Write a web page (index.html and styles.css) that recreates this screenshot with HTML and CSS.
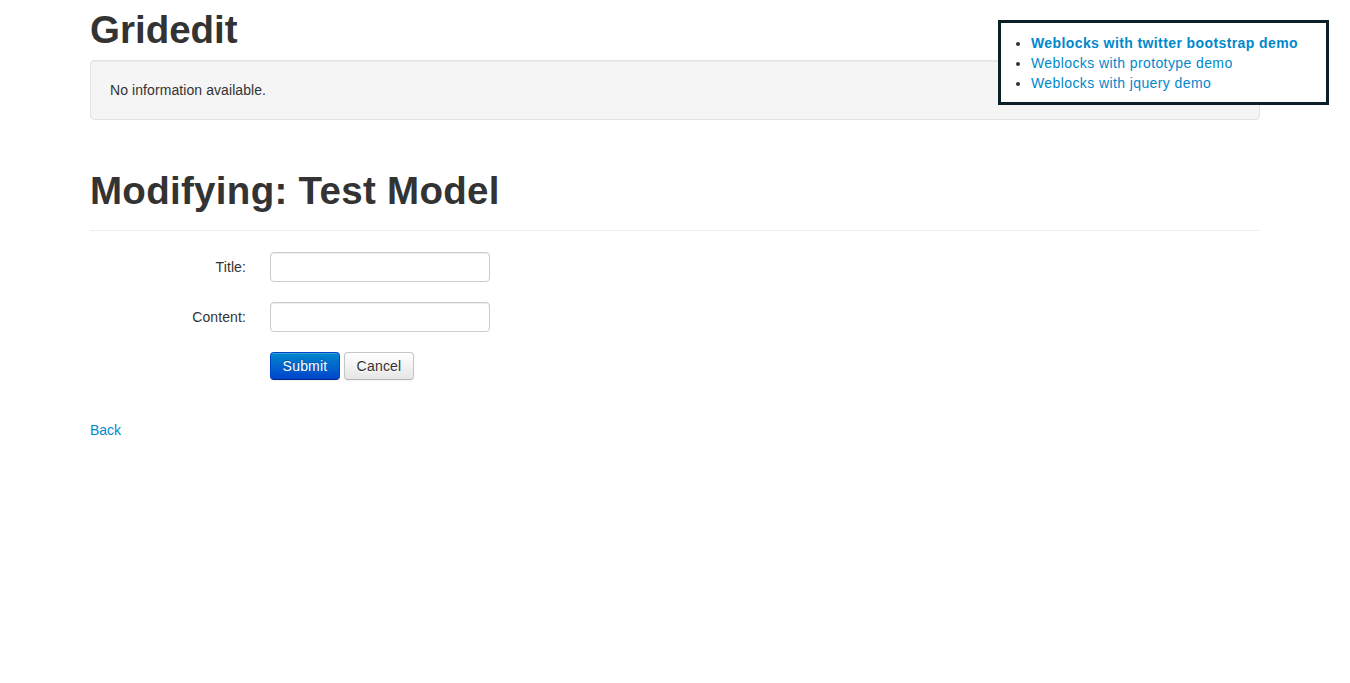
FILE: index.html
```html
<!DOCTYPE html>
<html>
<head>
<meta charset="utf-8">
<title>Gridedit</title>
<link rel="stylesheet" href="styles.css">
</head>
<body>
<div class="container">
  <h1 class="title">Gridedit</h1>
  <div class="well">No information available.</div>
  <div class="page-header"><h1>Modifying: Test Model</h1></div>
  <form class="form-horizontal">
    <div class="control-group">
      <label class="control-label">Title:</label>
      <div class="controls"><input type="text" class="field"></div>
    </div>
    <div class="control-group">
      <label class="control-label">Content:</label>
      <div class="controls"><input type="text" class="field"></div>
    </div>
    <div class="control-group actions">
      <div class="controls">
        <button type="button" class="btn btn-primary">Submit</button>
        <button type="button" class="btn">Cancel</button>
      </div>
    </div>
  </form>
  <a class="back" href="#">Back</a>
</div>
<div class="demos">
  <ul>
    <li><a href="#" class="current">Weblocks with twitter bootstrap demo</a></li>
    <li><a href="#">Weblocks with prototype demo</a></li>
    <li><a href="#">Weblocks with jquery demo</a></li>
  </ul>
</div>
</body>
</html>
```
FILE: styles.css
```css
html, body {
  margin: 0;
  padding: 0;
  background: #fff;
}
body {
  font-family: "Liberation Sans", Arial, sans-serif;
  font-size: 14px;
  line-height: 20px;
  color: #333;
}
a {
  color: #0088cc;
  text-decoration: none;
}
.container {
  width: 1170px;
  margin: 0 auto;
}
h1 {
  font-size: 38.5px;
  line-height: 40px;
  font-weight: bold;
  margin: 10px 0;
  color: #333;
}
.title {
  margin: 0;
  padding-top: 10px;
  padding-bottom: 10px;
}
.well {
  min-height: 20px;
  padding: 19px;
  background: #f5f5f5;
  border: 1px solid #e3e3e3;
  border-radius: 4px;
  box-shadow: inset 0 1px 1px rgba(0,0,0,0.05);
  letter-spacing: 0.08px;
}
.page-header {
  margin-top: 51px;
  padding-bottom: 9px;
  border-bottom: 1px solid #eee;
  margin-bottom: 21px;
}
.page-header h1 {
  margin: 0 0 10px;
  letter-spacing: 0.3px;
}
.form-horizontal {
  margin: 0;
}
.control-group {
  display: flex;
  margin-bottom: 20px;
}
.control-label {
  width: 156px;
  padding-right: 4px;
  padding-top: 5px;
  text-align: right;
  line-height: 20px;
  letter-spacing: 0.1px;
}
.controls {
  margin-left: 20px;
  display: flex;
  gap: 4px;
}
.actions .controls {
  margin-left: 180px;
}
.field {
  box-sizing: border-box;
  width: 220px;
  height: 30px;
  padding: 4px 6px;
  border: 1px solid #ccc;
  border-radius: 4px;
  box-shadow: inset 0 1px 1px rgba(0,0,0,0.075);
  font-family: inherit;
  font-size: 14px;
  margin: 0;
}
.actions {
  margin-bottom: 40px;
}
.btn {
  box-sizing: border-box;
  width: 70px;
  height: 28px;
  padding: 0;
  font-family: "Liberation Sans", Arial, sans-serif;
  font-size: 14px;
  line-height: 20px;
  letter-spacing: 0.2px;
  color: #333;
  text-shadow: 0 1px 1px rgba(255,255,255,0.75);
  background: linear-gradient(to bottom, #ffffff, #e6e6e6);
  border: 1px solid #c5c5c5;
  border-bottom-color: #b3b3b3;
  border-radius: 4px;
  box-shadow: inset 0 1px 0 rgba(255,255,255,0.2), 0 1px 2px rgba(0,0,0,0.05);
  margin: 0;
  cursor: pointer;
}
.btn-primary {
  color: #fff;
  text-shadow: 0 -1px 0 rgba(0,0,0,0.25);
  background: linear-gradient(to bottom, #0088cc, #0044cc);
  border-color: #0044cc #0044cc #002a80;
}
.back {
  display: inline-block;
  line-height: 20px;
}
.demos {
  position: absolute;
  top: 20px;
  right: 21px;
  width: 325px;
  border: 3px solid #0b1f26;
  background: #fff;
}
.demos ul {
  margin: 10px 0 9px 30px;
  padding: 0;
  list-style: disc;
  letter-spacing: 0.4px;
}
.demos li {
  line-height: 20px;
}
.demos .current {
  font-weight: bold;
}
```
